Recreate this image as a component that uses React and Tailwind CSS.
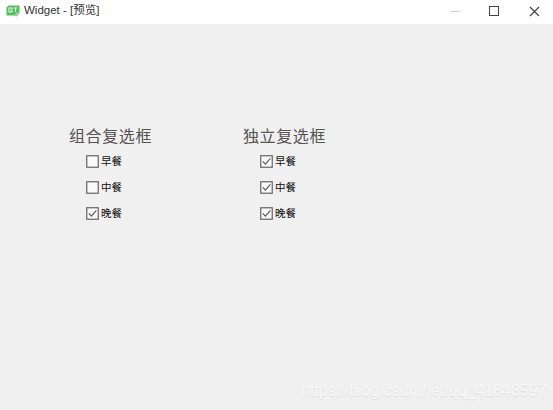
import React from 'react';

const cjk = "font-['Liberation_Sans','Noto_Sans_CJK_SC',sans-serif]";

const Check = ({ checked, label }) => (
  <div className="flex h-[26px] items-center">
    <svg width="13" height="13" viewBox="0 0 13 13" className="shrink-0">
      <rect x="0.75" y="0.75" width="11.5" height="11.5" fill="#fafafa" stroke="#6e6e6e" strokeWidth="1.3" />
      {checked && <path d="M2.8 6.4 L5.4 9.2 L10.4 3.4" fill="none" stroke="#555" strokeWidth="1.1" />}
    </svg>
    <span className={`ml-[2px] text-[10.5px] leading-none text-[#111] ${cjk}`}>{label}</span>
  </div>
);

const Group = ({ title, items, className }) => (
  <div className={className}>
    <div className="h-[18px] text-[16px] leading-[18px] tracking-[0.6px] whitespace-nowrap text-[#55524f] font-['Noto_Sans_CJK_SC',serif]">{title}</div>
    <div className="mt-[4px] ml-[17px]">
      {items.map((it) => (
        <Check key={it.label} label={it.label} checked={it.checked} />
      ))}
    </div>
  </div>
);

export default function App() {
  return (
    <div className="relative flex h-[410px] w-[553px] flex-col overflow-hidden bg-[#f0f0f0]">
      {/* title bar */}
      <div className="flex h-[24px] shrink-0 items-center bg-white pb-[2px]">
        <svg width="14" height="12" viewBox="0 0 14 12" className="ml-[6px]">
          <path d="M2.5 0.5 H13.5 V8 L11 10.5 H0.5 V2.5 Z" fill="#4fc25f" />
          <path d="M8 10.5 L11.5 6.5 L13 9 L11 11.5 Z" fill="#bbb" />
          <rect x="3" y="3" width="3" height="4" fill="none" stroke="#e8f8ea" strokeWidth="1" />
          <path d="M8 3 H11 M9.5 3 V7" stroke="#e8f8ea" strokeWidth="1" />
        </svg>
        <span className={`ml-[4px] text-[11.5px] leading-none text-[#333] ${cjk}`}>Widget - [预览]</span>
        <div className="ml-auto flex items-center">
          <div className="h-px w-[10px] bg-[#cfcfcf]" />
          <div className="ml-[29px] h-[10px] w-[10px] border-[1.5px] border-[#444]" />
          <svg width="11" height="11" viewBox="0 0 11 11" className="mr-[13px] ml-[30px]">
            <path d="M1 1 L10 10 M10 1 L1 10" stroke="#444" strokeWidth="1.2" />
          </svg>
        </div>
      </div>

      {/* content */}
      <div className="flex pt-[102px] pl-[69px]">
        <Group
          title="组合复选框"
          className="w-[174px]"
          items={[
            { label: '早餐', checked: false },
            { label: '中餐', checked: false },
            { label: '晚餐', checked: true },
          ]}
        />
        <Group
          title="独立复选框"
          items={[
            { label: '早餐', checked: true },
            { label: '中餐', checked: true },
            { label: '晚餐', checked: true },
          ]}
        />
      </div>

      {/* watermark */}
      <div className="absolute top-[381px] left-[301px] text-[16px] leading-[20px] whitespace-nowrap text-[#f8f8f8] [text-shadow:0_1px_1px_#dcdcdc] font-['Liberation_Sans',sans-serif]">
        https://blog.csdn.net/qq_41848597
      </div>
    </div>
  );
}
